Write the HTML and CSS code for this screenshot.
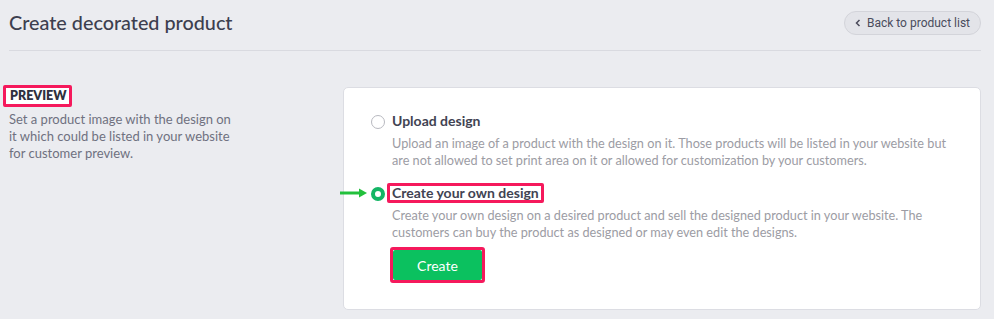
FILE: index.html
```html
<!DOCTYPE html>
<html lang="en">
<head>
<meta charset="UTF-8">
<title>Create decorated product</title>
<link rel="stylesheet" href="styles.css">
</head>
<body>

<div class="header">
    <h1>Create decorated product</h1>
    <button class="back-btn">
        <svg width="8" height="8" viewBox="0 0 8 8"><path d="M5.5 1 L2.5 4 L5.5 7" fill="none" stroke="#4a4a5a" stroke-width="1.5"/></svg>
        Back to product list
    </button>
</div>

<div class="main">
    <div class="side">
        <h2 class="mark">PREVIEW</h2>
        <p>Set a product image with the design on it which could be listed in your website for customer preview.</p>
    </div>

    <div class="card">
        <div class="option">
            <span class="radio"></span>
            <div class="option-body">
                <h3>Upload design</h3>
                <p>Upload an image of a product with the design on it. Those products will be listed in your website but are not allowed to set print area on it or allowed for customization by your customers.</p>
            </div>
        </div>

        <div class="option">
            <span class="arrow">
                <svg width="28" height="10" viewBox="0 0 28 10"><path d="M0 5 H20" stroke="#22c03c" stroke-width="3"/><path d="M19 0.5 L27 5 L19 9.5 Z" fill="#22c03c"/></svg>
            </span>
            <span class="radio checked"></span>
            <div class="option-body">
                <h3><span class="mark">Create your own design</span></h3>
                <p>Create your own design on a desired product and sell the designed product in your website. The customers can buy the product as designed or may even edit the designs.</p>
                <div class="mark btn-wrap"><button class="create-btn">Create</button></div>
            </div>
        </div>
    </div>
</div>

</body>
</html>
```

FILE: styles.css
```css
:root{
    --bg:#ebecf0;
    --text:#3b3d4c;
    --muted:#6f7180;
    --light:#9c9ca4;
    --line:#d9dae0;
    --pink:#f5195c;
    --green:#0bc15f;
}

*{
    box-sizing:border-box;
}

body{
    margin:0;
    background:var(--bg);
    font-family:"Lato", sans-serif;
    color:var(--text);
}

/* header */
.header{
    display:flex;
    align-items:center;
    justify-content:space-between;
    height:51px;
    margin:0 13px 0 9px;
    border-bottom:1px solid var(--line);
}

.header h1{
    margin:0 0 6px;
    font-size:19.8px;
    font-weight:500;
    color:#3d3f4f;
}

.back-btn{
    display:flex;
    align-items:center;
    gap:5px;
    height:24px;
    margin-bottom:5px;
    padding:0 10px 0 9px;
    border:1px solid #d3d4da;
    border-radius:12px;
    background:#e3e4e9;
    font-family:"Roboto", sans-serif;
    font-size:12px;
    color:#4a4c5c;
}

/* main */
.main{
    display:flex;
    align-items:flex-start;
    padding:33px 13px 0 3px;
}

.side{
    width:340px;
}

.side h2{
    display:inline-block;
    margin:0;
    padding:0 2px 0 4px;
    font-size:12.5px;
    line-height:16px;
    font-weight:800;
    color:#2f3140;
}

.side p{
    width:226px;
    margin:4px 0 0 6px;
    font-size:13px;
    line-height:17px;
    color:var(--muted);
}

.mark{
    border:3px solid var(--pink);
    border-radius:2px;
    background:#fff;
}

/* card */
.card{
    flex:1;
    margin-top:3px;
    padding:24px 24px 26px 27px;
    background:#fff;
    border:1px solid #dcdde3;
    border-radius:5px;
}

.option{
    position:relative;
    display:flex;
    gap:7px;
    margin-bottom:15px;
}

.option:last-child{
    margin-bottom:0;
}

.radio{
    flex:none;
    width:14px;
    height:14px;
    margin-top:3px;
    border:1px solid #b8b9c0;
    border-radius:50%;
}

.radio.checked{
    border:4px solid #14b565;
}

.arrow{
    position:absolute;
    left:-31px;
    top:4px;
    line-height:0;
}

.option h3{
    margin:0;
    font-size:14px;
    line-height:18px;
    font-weight:700;
    color:#414352;
}

.option h3 .mark{
    display:inline-block;
    margin:-1px 0 -1px -5px;
    padding:0 2px;
    line-height:14px;
}

.option p{
    margin:5px 0 0;
    font-size:12.7px;
    line-height:17px;
    color:var(--light);
}

.btn-wrap{
    display:inline-block;
    margin-top:6px;
    margin-left:-2px;
    border-radius:3px;
}

.create-btn{
    display:block;
    width:89px;
    height:30px;
    border:none;
    border-radius:2px;
    background:var(--green);
    color:#fff;
    font-family:"Lato", sans-serif;
    font-size:14px;
    cursor:pointer;
}
```
